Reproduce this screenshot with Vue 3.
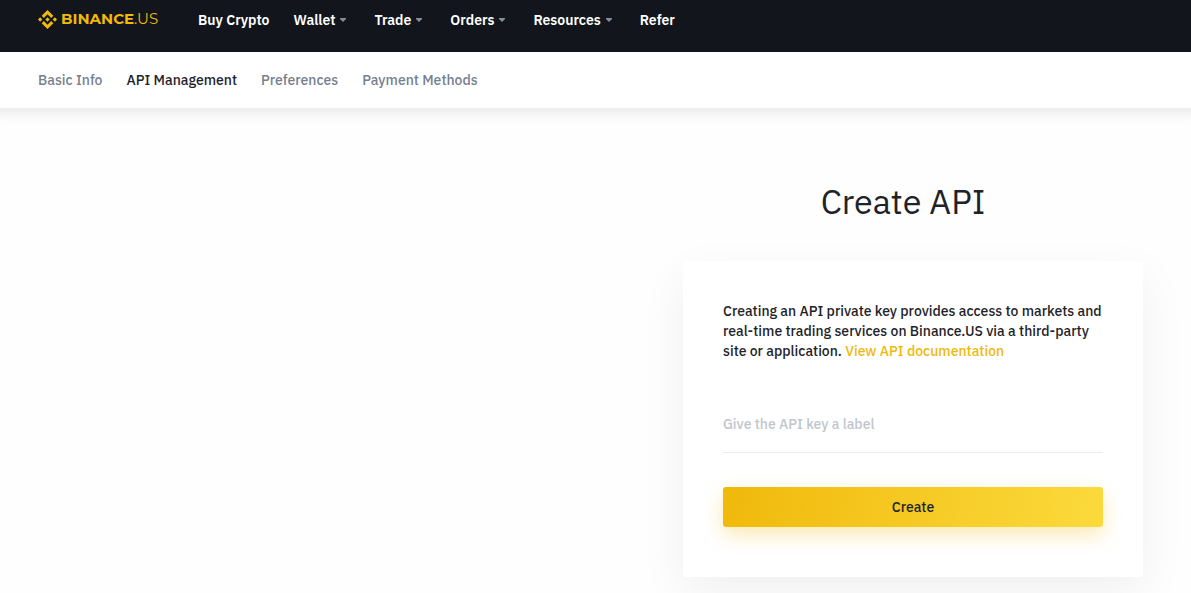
<script setup>
import { ref } from 'vue'

const mainNav = [
  { label: 'Buy Crypto', menu: false },
  { label: 'Wallet', menu: true },
  { label: 'Trade', menu: true },
  { label: 'Orders', menu: true },
  { label: 'Resources', menu: true },
  { label: 'Refer', menu: false },
]
const tabs = ['Basic Info', 'API Management', 'Preferences', 'Payment Methods']
const activeTab = ref('API Management')
const keyLabel = ref('')
</script>

<template>
  <div class="page">
    <header class="topbar">
      <a class="brand" href="#" aria-label="Binance.US">
        <svg class="mark" viewBox="0 0 126.6 126.6" aria-hidden="true">
          <path d="M38.7 53.2 63.3 28.6 87.9 53.2 102.2 38.9 63.3 0 24.4 38.9ZM0 63.3 14.3 49 28.6 63.3 14.3 77.6ZM38.7 73.4 63.3 98 87.9 73.4 102.2 87.7 63.3 126.6 24.4 87.7ZM98 63.3 112.3 49 126.6 63.3 112.3 77.6ZM77.8 63.3 63.3 48.8 48.8 63.3 63.3 77.8Z" />
        </svg>
        <span class="wordmark"><b>BINANCE</b>.US</span>
      </a>
      <nav class="main-nav" aria-label="Main">
        <template v-for="item in mainNav" :key="item.label">
          <button v-if="item.menu" class="nav-item has-menu" type="button">
            {{ item.label }}
            <svg class="caret" viewBox="0 0 6 4" aria-hidden="true"><path d="M0 0h6v1L3 4 0 1z" /></svg>
          </button>
          <a v-else class="nav-item" href="#">{{ item.label }}</a>
        </template>
      </nav>
    </header>

    <nav class="tabs" aria-label="Account">
      <a
        v-for="tab in tabs"
        :key="tab"
        href="#"
        class="tab"
        :class="{ active: tab === activeTab }"
        @click.prevent="activeTab = tab"
      >{{ tab }}</a>
    </nav>

    <main class="content">
      <section class="create">
        <h1>Create API</h1>
        <form class="card" @submit.prevent>
          <p class="intro">
            Creating an API private key provides access to markets and real-time trading services on Binance.US via a third-party site or application. <a href="#">View API documentation</a>
          </p>
          <input v-model="keyLabel" type="text" aria-label="API key label" placeholder="Give the API key a label" />
          <button class="submit" type="submit">Create</button>
        </form>
      </section>
    </main>
  </div>
</template>

<style>
body {
  margin: 0;
  background: #fefefe;
}
</style>

<style scoped>
.page {
  min-height: 100vh;
  overflow: hidden;
  box-sizing: border-box;
  font-family: "IBM Plex Sans", Roboto, sans-serif;
  font-size: 14px;
  font-weight: 500;
  line-height: 20px;
  color: #1e2329;
}
a {
  color: inherit;
  text-decoration: none;
}
.topbar {
  position: relative;
  z-index: 1;
  display: flex;
  align-items: flex-start;
  gap: 40px;
  height: 52px;
  padding: 10px 38px 0;
  box-sizing: border-box;
  background: #12161c;
}
.brand {
  display: flex;
  align-items: center;
  gap: 4px;
  width: 120px;
  height: 18px;
  color: #f0b90b;
  white-space: nowrap;
}
.mark {
  width: 19px;
  height: 19px;
  flex: none;
  fill: currentColor;
}
.wordmark {
  font-family: Montserrat, Lato, sans-serif;
  font-size: 15px;
  font-weight: 400;
  line-height: 18px;
}
.wordmark b {
  font-weight: 700;
}
.main-nav {
  display: flex;
  gap: 24px;
}
.nav-item {
  display: flex;
  align-items: center;
  padding: 0;
  border: 0;
  background: none;
  color: #fff;
  font: inherit;
  font-weight: 600;
  white-space: nowrap;
  cursor: pointer;
}
.has-menu {
  gap: 5px;
  padding-right: 4px;
}
.caret {
  width: 6px;
  height: 4px;
  fill: #848e9c;
}
.tabs {
  display: flex;
  align-items: center;
  gap: 24px;
  height: 56px;
  padding: 0 38px;
  background: #fff;
  box-shadow: 0 -8px 16px 10px rgba(0, 0, 0, 0.12);
}
.tab {
  color: #76808f;
}
.tab.active {
  color: #1e2329;
}
.content {
  display: flex;
  justify-content: flex-end;
  padding: 69px 48px 16px;
}
.create {
  width: 460px;
}
h1 {
  margin: 0 20px 36px 0;
  font-size: 34px;
  font-weight: 400;
  line-height: 48px;
  text-align: center;
}
.card {
  padding: 40px 40px 50px;
  border-radius: 4px;
  background: #fff;
  box-shadow: 0 16px 48px rgba(0, 0, 0, 0.06);
}
.intro {
  margin: 0 0 34px;
}
.intro a {
  color: #f0b90b;
}
input {
  display: block;
  width: 100%;
  height: 58px;
  margin-bottom: 34px;
  padding: 0;
  box-sizing: border-box;
  border: 0;
  border-bottom: 1px solid #eaecef;
  outline: 0;
  background: none;
  color: inherit;
  font: inherit;
}
input::placeholder {
  color: #c1c6cd;
  opacity: 1;
}
.submit {
  display: block;
  width: 100%;
  height: 40px;
  border: 0;
  border-radius: 3px;
  background: linear-gradient(100deg, #f0b90b, #fbda3c);
  box-shadow: 0 8px 20px rgba(240, 185, 11, 0.3);
  color: #1e2329;
  font: inherit;
  cursor: pointer;
}
</style>
